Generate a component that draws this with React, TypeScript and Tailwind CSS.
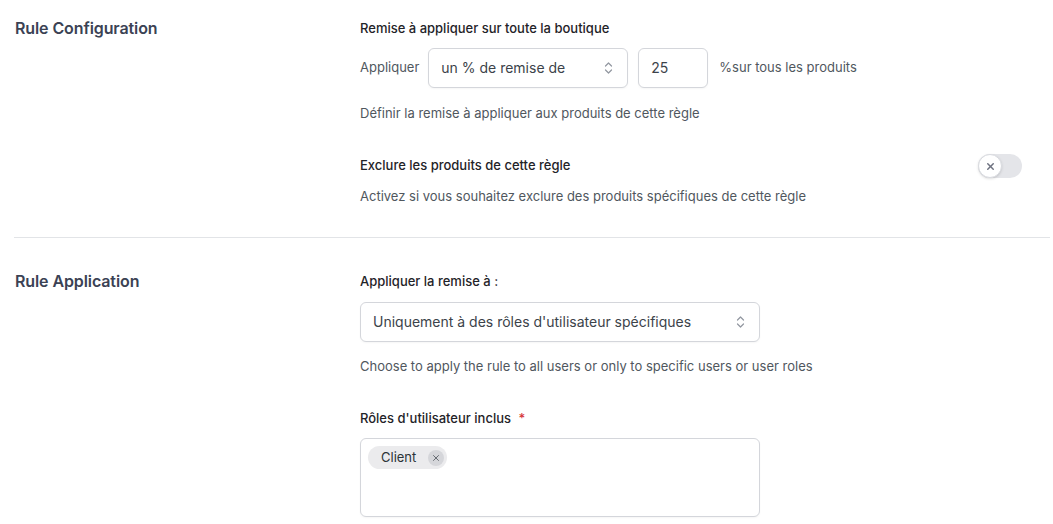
import { X } from "lucide-react";

type SelectProps = {
  value: string;
  className?: string;
};

/** Native-looking select box with the little up/down chevron pair. */
function FakeSelect({ value, className = "" }: SelectProps) {
  return (
    <div
      className={`flex h-10 items-center justify-between rounded-md border border-[#d4d6db] bg-white pl-[12px] pr-[14px] text-sm text-[#3c434a] shadow-[0_1px_2px_rgba(0,0,0,0.04)] ${className}`}
    >
      <span>{value}</span>
      <svg width="9" height="14" viewBox="0 0 9 14" fill="none" className="text-[#9297a0]">
        <path d="M1.5 5L4.5 2L7.5 5" stroke="currentColor" strokeWidth="1.2" strokeLinecap="round" strokeLinejoin="round" />
        <path d="M1.5 9L4.5 12L7.5 9" stroke="currentColor" strokeWidth="1.2" strokeLinecap="round" strokeLinejoin="round" />
      </svg>
    </div>
  );
}

/** Off-state switch. */
function Toggle() {
  return (
    <div className="flex h-6 w-11 items-center rounded-full bg-[#e4e5e9]">
      <div className="flex h-6 w-6 items-center justify-center rounded-full border border-[#d9dbe0] bg-white shadow-sm">
        <X size={11} strokeWidth={3.2} className="text-[#6e7280]" />
      </div>
    </div>
  );
}

export default function App() {
  return (
    <div
      className="min-h-screen bg-white pl-[14px] pr-[3px] text-[13px] text-[#3c434a]"
      style={{ fontFamily: "Inter, 'Noto Sans', sans-serif" }}
    >
      {/* Section 1: Rule Configuration */}
      <section className="flex pt-[18px] pb-[31px]">
        <h2 className="w-[346px] shrink-0 pl-px text-base leading-5 font-semibold tracking-[-0.1px] text-[#3b4254]">
          Rule Configuration
        </h2>
        <div className="flex-1 pr-[28px]">
          <p className="leading-5 font-medium text-[#1f2328]">
            Remise à appliquer sur toute la boutique
          </p>
          <div className="mt-[10px] flex items-center">
            <span className="mr-[9px] text-[#50575e]">Appliquer</span>
            <FakeSelect value="un % de remise de" className="w-[200px]" />
            <div className="ml-[10px] flex h-10 w-[70px] items-center rounded-md border border-[#d4d6db] bg-white pl-[12px] text-sm text-[#3c434a] shadow-[0_1px_2px_rgba(0,0,0,0.04)]">
              25
            </div>
            <span className="ml-[11px] text-[#50575e]">%sur tous les produits</span>
          </div>
          <p className="mt-[15px] leading-5 text-[#50575e]">
            Définir la remise à appliquer aux produits de cette règle
          </p>

          <div className="mt-[31px] flex h-6 items-center justify-between">
            <p className="font-medium text-[#1f2328]">Exclure les produits de cette règle</p>
            <Toggle />
          </div>
          <p className="mt-[8px] leading-5 text-[#50575e]">
            Activez si vous souhaitez exclure des produits spécifiques de cette règle
          </p>
        </div>
      </section>

      <div className="h-px bg-[#e2e4e7]" />

      {/* Section 2: Rule Application */}
      <section className="flex pt-[33px]">
        <h2 className="w-[346px] shrink-0 pl-px text-base leading-5 font-semibold tracking-[-0.1px] text-[#3b4254]">
          Rule Application
        </h2>
        <div className="flex-1 pr-[28px]">
          <p className="leading-5 font-medium text-[#1f2328]">Appliquer la remise à :</p>
          <FakeSelect
            value="Uniquement à des rôles d'utilisateur spécifiques"
            className="mt-[11px] w-[400px]"
          />
          <p className="mt-[14px] leading-5 text-[#50575e]">
            Choose to apply the rule to all users or only to specific users or user roles
          </p>

          <p className="mt-[32px] leading-5 font-medium text-[#1f2328]">
            Rôles d'utilisateur inclus <span className="ml-1 text-[#d63638]">*</span>
          </p>
          <div className="mt-[10px] h-[79px] w-[400px] rounded-md border border-[#d4d6db] bg-white p-[7px] shadow-[0_1px_2px_rgba(0,0,0,0.04)]">
            <span className="inline-flex h-[23px] items-center gap-[12px] rounded-full bg-[#ebebed] pr-[3px] pl-[13px] text-[13px] text-[#2c3338]">
              Client
              <span className="flex h-4 w-4 items-center justify-center rounded-full bg-[#d5d6da]">
                <X size={10} strokeWidth={2} className="text-[#50575e]" />
              </span>
            </span>
          </div>
        </div>
      </section>
    </div>
  );
}
